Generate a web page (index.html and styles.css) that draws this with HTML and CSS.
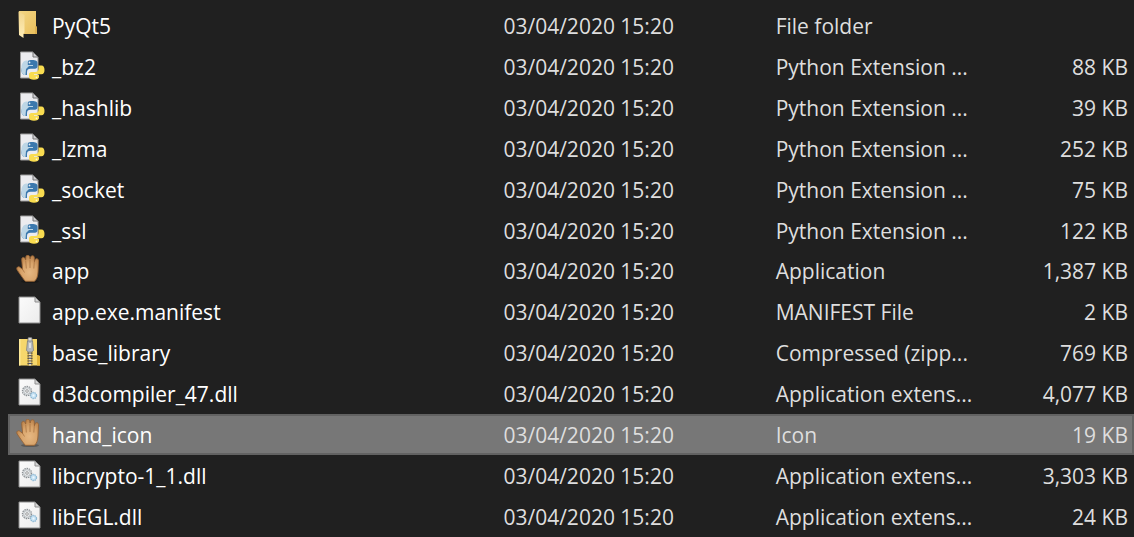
FILE: index.html
```
<!DOCTYPE html>
<html lang="en">
<head>
<meta charset="utf-8">
<title>Files</title>
<link rel="stylesheet" href="styles.css">
</head>
<body>
<svg class="sprite" aria-hidden="true">
  <defs>
    <linearGradient id="g-folder" x1="0" y1="0" x2="1" y2="1"><stop offset="0" stop-color="#f3d584"/><stop offset="1" stop-color="#e9bf5c"/></linearGradient>
    <linearGradient id="g-flap" x1="0" y1="0" x2="0" y2="1"><stop offset="0" stop-color="#f2d58c"/><stop offset="1" stop-color="#ffeeb8"/></linearGradient>
    <radialGradient id="g-hand" cx=".58" cy=".66" r=".6"><stop offset="0" stop-color="#e6b883"/><stop offset=".6" stop-color="#d9a56c"/><stop offset="1" stop-color="#c08850"/></radialGradient>
    <linearGradient id="g-paper" x1="0" y1="0" x2="1" y2="1"><stop offset="0" stop-color="#fbfbfb"/><stop offset="1" stop-color="#ececec"/></linearGradient>
    <symbol id="page" viewBox="0 0 30 32">
      <path d="M3 1h16l5 5v21H3z" fill="url(#g-paper)" stroke="#8d8d8d"/>
      <path d="M19 1v5h5z" fill="#d4d4d4" stroke="#8d8d8d"/>
    </symbol>
    <symbol id="folder" viewBox="0 0 30 32">
      <path d="M3 1h17v15l1 1v7H4z" fill="url(#g-folder)"/>
      <path d="M19 16l2 1v7h-2z" fill="#dcb050"/>
      <path d="M2.500 1.500L8.500 5v17.500l-1 1V28L3 25z" fill="url(#g-flap)"/>
    </symbol>
    <symbol id="python" viewBox="0 0 30 32">
      <path d="M4.500 1H17l5 5v21H4.500z" fill="#ececef" stroke="#9b9b9b"/>
      <path d="M17 1v5h5z" fill="#cfcfd3" stroke="#777"/>
      <path d="M16 9c-4 0-4.500 1.200-4.500 3v2H17v1H9c-2.500 0-3.500 1.700-3.500 4.500S7 24 9 24h2v-3c0-2 1.300-3.200 3.500-3.200H19c1.500 0 2.500-1 2.500-2.500V12c0-2-1.500-3-5.500-3z" fill="#3b78ad"/>
      <path d="M5.500 18.500C5 13 7 10 10.500 9.500h1.200c-.4 1.500-.2 3-.2 4.500H17v1h-4l-3 3-.5 6H9c-2.500 0-3.400-2.500-3.500-5.500z" fill="#bdd6e6"/>
      <path d="M22.500 14.500V18c0 2-1.500 3-3.500 3h-3.500c-1.500 0-2.500 1-2.500 2.500V26c0 1.800 2 2.700 5 2.700s5-.9 5-3V24h-5v-.700h7.500c2.200 0 3-1.800 3-4.300s-1-4.500-3-4.500z" fill="#f9dc50"/>
      <circle cx="13.500" cy="11.500" r=".9" fill="#e8f1f8"/>
      <circle cx="20.500" cy="26.300" r=".9" fill="#fff8d0"/>
    </symbol>
    <symbol id="hand" viewBox="0 0 30 32">
      <ellipse cx="14" cy="26.500" rx="9" ry="1.600" fill="#000" opacity=".25"/>
      <path d="M6.600 14.500L5.700 4.500C5.500 2 8.700 1.700 9.200 4l.5 1L9.900 2c.1-2.400 3.500-2.400 3.800 0l.4 2 .5-1.700c.4-2.200 3.700-2 3.700.4l.1 4 .6-1.800c.7-2 3.600-1.400 3.500.8L22 17c-.2 4.500-1.200 7-3.500 9.300H9.500C8 25 6.800 23 5 20.500L1.200 15C-.2 12.300 2.500 10.800 4.200 12.500z" fill="url(#g-hand)" stroke="#976334" stroke-width=".9"/>
      <path d="M9.700 5.500l.6 8M14 4.500v8.500M18.300 7l-.5 6.500M6.600 14.500l1.900 3" fill="none" stroke="#a87342" stroke-width=".8"/>
    </symbol>
    <symbol id="zip" viewBox="0 0 30 32">
      <path d="M3 2h18v16l3 1v9.500H3z" fill="#f6d76c"/>
      <path d="M3 2h1.500v26.500H3z" fill="#fde998"/>
      <path d="M21 18l3 1v9.500h-3z" fill="#e4b63a"/>
      <path d="M11.500 2h5v26.500h-5z" fill="#cda94d"/>
      <path d="M14 13v15.500" stroke="#555" stroke-width="5" stroke-dasharray="1.200 1.400"/>
      <path d="M14 14v14.500" stroke="#f0f0f0" stroke-width="1.500" stroke-dasharray="1.400 1.200"/>
      <rect x="12" y=".5" width="4" height="5" rx="1" fill="#d7d7d7" stroke="#777" stroke-width=".7"/>
      <path d="M11.500 4h5l1 9.500-2 1.500h-3l-2-1.500z" fill="#b5b9bd" stroke="#74787c" stroke-width=".7"/>
      <path d="M14 6v5" stroke="#eee" stroke-width="1.500"/>
    </symbol>
    <symbol id="dll" viewBox="0 0 30 32">
      <use href="#page"/>
      <circle cx="11" cy="13" r="4.600" fill="#e7eaec" stroke="#8b9094" stroke-width="1.200" stroke-dasharray="1.500 .8"/>
      <circle cx="11" cy="13" r="3.400" fill="none" stroke="#a5aaad" stroke-width=".7"/>
      <circle cx="11" cy="13" r="1.300" fill="#fff" stroke="#888" stroke-width=".8"/>
      <circle cx="17.500" cy="17.500" r="3" fill="#c9e4f5" stroke="#8fb9d4" stroke-width="1.300" stroke-dasharray="1.500 .6"/>
      <circle cx="17.500" cy="17.500" r="1" fill="#eef8ff"/>
    </symbol>
  </defs>
</svg>
<table class="files">
  <colgroup><col class="col-name"><col class="col-date"><col class="col-type"><col class="col-size"></colgroup>
  <tbody>
    <tr><td><div class="name"><svg class="icon"><use href="#folder"/></svg><span>PyQt5</span></div></td><td>03/04/2020 15:20</td><td class="type">File folder</td><td class="size"></td></tr>
    <tr><td><div class="name"><svg class="icon"><use href="#python"/></svg><span>_bz2</span></div></td><td>03/04/2020 15:20</td><td class="type">Python Extension ...</td><td class="size">88 KB</td></tr>
    <tr><td><div class="name"><svg class="icon"><use href="#python"/></svg><span>_hashlib</span></div></td><td>03/04/2020 15:20</td><td class="type">Python Extension ...</td><td class="size">39 KB</td></tr>
    <tr><td><div class="name"><svg class="icon"><use href="#python"/></svg><span>_lzma</span></div></td><td>03/04/2020 15:20</td><td class="type">Python Extension ...</td><td class="size">252 KB</td></tr>
    <tr><td><div class="name"><svg class="icon"><use href="#python"/></svg><span>_socket</span></div></td><td>03/04/2020 15:20</td><td class="type">Python Extension ...</td><td class="size">75 KB</td></tr>
    <tr><td><div class="name"><svg class="icon"><use href="#python"/></svg><span>_ssl</span></div></td><td>03/04/2020 15:20</td><td class="type">Python Extension ...</td><td class="size">122 KB</td></tr>
    <tr><td><div class="name"><svg class="icon"><use href="#hand"/></svg><span>app</span></div></td><td>03/04/2020 15:20</td><td class="type">Application</td><td class="size">1,387 KB</td></tr>
    <tr><td><div class="name"><svg class="icon"><use href="#page"/></svg><span>app.exe.manifest</span></div></td><td>03/04/2020 15:20</td><td class="type">MANIFEST File</td><td class="size">2 KB</td></tr>
    <tr><td><div class="name"><svg class="icon"><use href="#zip"/></svg><span>base_library</span></div></td><td>03/04/2020 15:20</td><td class="type">Compressed (zipp...</td><td class="size">769 KB</td></tr>
    <tr><td><div class="name"><svg class="icon"><use href="#dll"/></svg><span>d3dcompiler_47.dll</span></div></td><td>03/04/2020 15:20</td><td class="type">Application extens...</td><td class="size">4,077 KB</td></tr>
    <tr class="selected"><td><div class="name"><svg class="icon"><use href="#hand"/></svg><span>hand_icon</span></div></td><td>03/04/2020 15:20</td><td class="type">Icon</td><td class="size">19 KB</td></tr>
    <tr><td><div class="name"><svg class="icon"><use href="#dll"/></svg><span>libcrypto-1_1.dll</span></div></td><td>03/04/2020 15:20</td><td class="type">Application extens...</td><td class="size">3,303 KB</td></tr>
    <tr><td><div class="name"><svg class="icon"><use href="#dll"/></svg><span>libEGL.dll</span></div></td><td>03/04/2020 15:20</td><td class="type">Application extens...</td><td class="size">24 KB</td></tr>
  </tbody>
</table>
</body>
</html>
```
FILE: styles.css
```
* { box-sizing: border-box; }
body {
  margin: 0;
  height: 100vh;
  padding: 6px 0 0 8px;
  background: #202020;
  color: #dedede;
  font: 21px/28px "Open Sans", "Noto Sans", sans-serif;
}
.sprite { position: absolute; width: 0; height: 0; }
.files {
  width: 100%;
  height: 100%;
  table-layout: fixed;
  border-collapse: collapse;
}
.col-name { width: 44%; }
.col-date { width: 24%; }
.col-type { width: 20%; }
.col-size { width: 12%; }
td {
  padding: 0;
  vertical-align: middle;
  white-space: nowrap;
}
.type { padding-left: 2px; }
.size { padding-right: 6px; text-align: right; }
.name {
  display: flex;
  align-items: center;
  gap: 6px;
  padding-left: 8px;
  color: #fff;
}
.icon { width: 30px; height: 32px; flex: none; }
.selected {
  background: #777;
  box-shadow: inset 0 0 0 2px #626262;
}
```
